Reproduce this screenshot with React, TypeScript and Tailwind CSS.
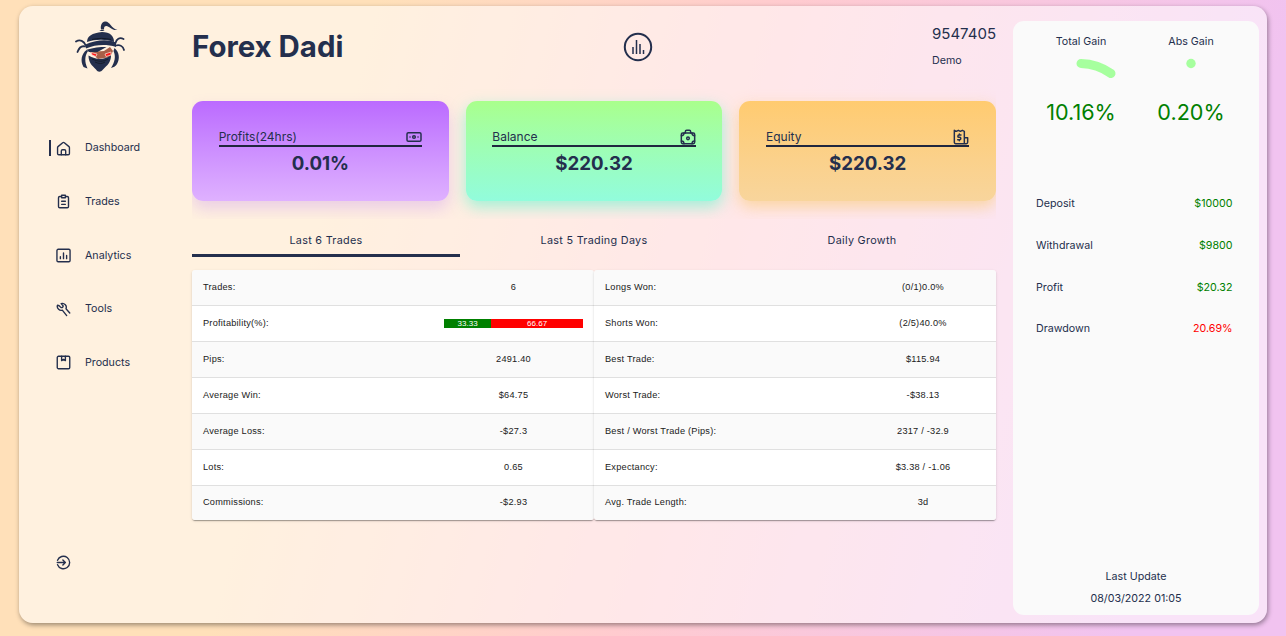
import React from 'react';

const ink = '#242f4d';

function Svg({ size, children }: { size: number; children: React.ReactNode }) {
  return (
    <svg width={size} height={size} viewBox="0 0 24 24" fill="none" stroke={ink} strokeWidth="2.200" strokeLinecap="round" strokeLinejoin="round" className="shrink-0">
      {children}
    </svg>
  );
}

const icons: Record<string, React.ReactNode> = {
  Dashboard: (
    <>
      <path d="M2.500 10.500a2 2 0 0 1 .7-1.500l7.500-6.200a2 2 0 0 1 2.600 0l7.500 6.200a2 2 0 0 1 .7 1.500V20a2 2 0 0 1-2 2h-15a2 2 0 0 1-2-2z" />
      <path d="M8.500 22v-6a2 2 0 0 1 2-2h3a2 2 0 0 1 2 2v6" />
    </>
  ),
  Trades: (
    <>
      <path d="M8 4H6a2 2 0 0 0-2 2v14a2 2 0 0 0 2 2h12a2 2 0 0 0 2-2V6a2 2 0 0 0-2-2h-2" />
      <path d="M9 2h6v4H9zM9 11.500h6M9 16.500h6" />
    </>
  ),
  Analytics: (
    <>
      <rect x="1.500" y="2" width="21" height="20" rx="2" />
      <path d="M7 14v3M12 8v9M17 12v5" />
    </>
  ),
  Tools: (
    <path d="m22 17.500-6-6.700c.9-2.500.5-4.900-1.100-6.500C12.800 2.200 10.400 1.700 8.300 2.600l3 3.400v1.600L9.700 9H8.100L5 6l-2.600-.8C1.500 7.500 2.300 10 4.200 11.700c1.500 1.500 3.800 2.100 5.900 1.400l7 8.600" />
  ),
  Products: (
    <>
      <rect x="2" y="2" width="20" height="20" rx="2" />
      <path d="M9 2v7l3-2 3 2V2" />
    </>
  ),
};

function Logo() {
  return (
    <svg width="52" height="52" viewBox="0 0 52 52" className="ml-[56px] shrink-0">
      <g fill="none" stroke="#242f4d" strokeWidth="1.800" strokeLinecap="round">
        <path d="M10.500 24C9 20 5 18 1 20.500M10 25.500C6.500 24.500 4 27 2.500 31M40.500 22c1-4 4-6 8-4M41 24.500c4-1 7 1 8 4.500" />
      </g>
      <path d="M11.500 29c-5 4-6.500 10.500-3 17l4 1.500C9.500 41 9.500 35 13 30zM39.500 27c5 4 5.500 11 2.500 16-1 2-3 3-6 4 4-6 5-12 2.500-17z" fill="#242f4d" />
      <path d="M26 8.500c-.8-4 1-8 4-8 5-.5 6 7 12.500 8.500-6 .8-8.500-4.500-11.500-4-2 .3-1.800 1.500-2 3.500z" fill="#242f4d" />
      <path d="M24.500 10c1-1.200 4-1.200 5 0z" fill="#242f4d" />
      <path d="M12 21c0-6 5-9 15-10 8 0 12 4 12 10-8-3-18-3-27 0z" fill="#242f4d" />
      <path d="M10.500 23.500c9-4.500 22-6 30.500-2V26c-10-3-20-2.500-30 1.500z" fill="#242f4d" />
      <path d="M17 18.500c6-1.500 13-1.500 19 0" fill="none" stroke="#111827" strokeWidth="1" />
      <path d="m15 31 14-1 6-4 3 4-3 6-12 2z" fill="#a75f48" />
      <path d="M11.500 28.800c7-2.300 13-2.800 20-2.800l-9 5h-8.500z" fill="#242f4d" />
      <path d="m16 31.500 6 1.500-1 2.500-4-1.500zM30 33l6-2v3l-5 1.500z" fill="#ff1717" stroke="#ffe5db" strokeWidth=".7" />
      <path d="M13.500 34.500c8 4.500 15 4.500 22.500 0 0 7-4 10-8 14-2.500 3-5 3-7 0-4-4-7.500-7-7.500-14z" fill="#242f4d" />
      <path d="M17 38c7 3 11 3 16 0M20 41c4 2 7 2 10 0" fill="none" stroke="#161e2b" />
    </svg>
  );
}

const cards = [
  {
    name: 'Profits(24hrs)',
    value: '0.01%',
    style: 'bg-linear-to-b from-[#bb6aff] to-[#dfb1ff] shadow-[0_8px_15px_rgba(188,128,246,.3)]',
    icon: (
      <>
        <rect x="1.500" y="5.500" width="21" height="13" rx="2" />
        <circle cx="12" cy="12" r="2" />
        <path d="M6 12h.1M18 12h.1" />
      </>
    ),
  },
  {
    name: 'Balance',
    value: '$220.32',
    style: 'bg-linear-to-b from-[#a9ff8c] to-[#92fcdc] shadow-[0_6px_15px_rgba(100,245,205,.6)]',
    icon: (
      <>
        <rect x="2" y="6" width="20" height="16" rx="2" />
        <path d="M8 6V4a2 2 0 0 1 2-2h4a2 2 0 0 1 2 2v2M2 10a4 4 0 0 0 4-4M18 6a4 4 0 0 0 4 4M2 18a4 4 0 0 1 4 4M18 22a4 4 0 0 1 4-4" />
        <circle cx="12" cy="14" r="2" />
      </>
    ),
  },
  {
    name: 'Equity',
    value: '$220.32',
    style: 'bg-linear-to-b from-[#ffcb70] to-[#f8d59c] shadow-[0_6px_15px_rgba(250,205,130,.7)]',
    icon: (
      <>
        <path d="M17 22H4a2 2 0 0 1-2-2V2l3 1.500L8 2l3 1.500L14 2l3 1.500V22h3a2 2 0 0 0 2-2v-7h-5" />
        <path d="M12 9H9a1.500 1.500 0 0 0 0 3.500h1a1.500 1.500 0 0 1 0 3.500H7M9.500 7.500V9m0 7v1.500" />
      </>
    ),
  },
];

const left = [
  ['Trades:', '6'],
  ['Profitability(%):', ''],
  ['Pips:', '2491.40'],
  ['Average Win:', '$64.75'],
  ['Average Loss:', '-$27.3'],
  ['Lots:', '0.65'],
  ['Commissions:', '-$2.93'],
];
const right = [
  ['Longs Won:', '(0/1)0.0%'],
  ['Shorts Won:', '(2/5)40.0%'],
  ['Best Trade:', '$115.94'],
  ['Worst Trade:', '-$38.13'],
  ['Best / Worst Trade (Pips):', '2317 / -32.9'],
  ['Expectancy:', '$3.38 / -1.06'],
  ['Avg. Trade Length:', '3d'],
];

function Table({ rows, labelWidth }: { rows: string[][]; labelWidth: string }) {
  return (
    <div className="flex h-[250px] flex-1 flex-col overflow-hidden rounded-[3px] shadow-[0_2px_1px_-1px_rgba(0,0,0,.2),0_1px_1px_rgba(0,0,0,.14),0_1px_3px_rgba(0,0,0,.12)]">
      {rows.map(([label, value], i) => (
        <div key={label} className={`flex flex-1 items-center border-b border-[#e0e0e0] pt-[0.6px] font-['Liberation_Sans',sans-serif] text-[9.200px] tracking-[0.24px] text-[#212121] last:border-0 last:pt-0 ${i % 2 ? 'bg-white' : 'bg-[#fafafa]'}`}>
          <div className={`pl-[11px] ${labelWidth}`}>{label}</div>
          {value ? (
            <div className="flex-1 text-center">{value}</div>
          ) : (
            <div className="mr-[11px] ml-[11px] flex h-[9px] flex-1 text-center text-[8px] leading-[9px] tracking-normal text-white">
              <div className="w-[34%] bg-[#008000]">33.33</div>
              <div className="w-[66%] bg-[#ff0000]">66.67</div>
            </div>
          )}
        </div>
      ))}
    </div>
  );
}

export default function App() {
  return (
    <div className="h-[636px] overflow-hidden bg-[linear-gradient(105deg,#ffe0b9_26%,#ffcbcf_54%,#f1c3f0_89%)] pt-[6px] pl-[19px] font-['Inter',sans-serif] text-[#242f4d]">
      <div className="flex h-[617px] w-[1248px] rounded-[14px] bg-white/54 shadow-[1px_2px_5px_rgba(0,0,0,.4)]">
        <aside className="flex w-[173px] flex-col pt-[15px]">
          <Logo />
          <nav className="mt-[48.400px]">
            {Object.entries(icons).map(([name, icon], i) => (
              <div key={name} className="flex h-[53.700px] items-center pl-[30px] text-[10.700px]">
                <span className={`mr-[5px] h-4 w-[2px] ${i ? '' : 'bg-[#242f4d]'}`} />
                <Svg size={15}>{icon}</Svg>
                <span className="ml-[14px]">{name}</span>
              </div>
            ))}
          </nav>
          <div className="mt-[165.600px] ml-[37px]">
            <Svg size={15}>
              <path d="M2.500 8.500a10 10 0 1 1 0 7M2 12h13M11 8l4 4-4 4" />
            </Svg>
          </div>
        </aside>
        <main className="w-[804px]">
          <header className="flex h-[95px] items-start justify-between">
            <h1 className="w-[300px] pt-[22px] text-[29.400px] leading-[37px] font-bold">Forex Dadi</h1>
            <svg width="30" height="30" viewBox="0 0 30 30" className="mt-[26px]" fill="none" stroke="#242f4d" strokeWidth="2">
              <circle cx="15" cy="15" r="13.200" />
              <path d="M10 15v7M13.500 8v14M17 12v10M20.500 18v4" strokeWidth="1.500" />
            </svg>
            <div className="flex w-[212px] justify-end pt-[17px]">
              <div className="w-[64px]">
                <div className="text-[15px] leading-[22px]">9547405</div>
                <div className="mt-[9px] text-[10.700px] leading-[13px]">Demo</div>
              </div>
            </div>
          </header>
          <div className="-mt-3 flex h-[130px] justify-between overflow-hidden pt-3">
            {cards.map((c) => (
              <section key={c.name} className={`h-[100px] w-[256.700px] rounded-[11px] px-[26.700px] pt-[28px] ${c.style}`}>
                <div className="flex h-[18px] items-center justify-between border-b-2 border-[#20273f] text-[12px]">
                  <span>{c.name}</span>
                  <Svg size={16}>{c.icon}</Svg>
                </div>
                <div className="mt-[4px] text-center text-[18.700px] leading-[25px] font-bold">{c.value}</div>
              </section>
            ))}
          </div>
          <div className="mt-[5px] flex h-[33px] text-center text-[10.800px] leading-[33px] tracking-[0.3px]">
            <div className="flex-1 border-b-[3px] border-[#242f4d]">Last 6 Trades</div>
            <div className="flex-1">Last 5 Trading Days</div>
            <div className="flex-1">Daily Growth</div>
          </div>
          <div className="mt-[13px] flex">
            <Table rows={left} labelWidth="w-[241px]" />
            <Table rows={right} labelWidth="w-[256px]" />
          </div>
        </main>
        <aside className="mt-[15px] ml-[17px] flex h-[594px] w-[246px] flex-col rounded-[11px] bg-[#fafafa]">
          <div className="flex justify-between px-[27px] pt-[13px] text-center text-[10.700px]">
            <div className="w-[82px]">
              <div className="leading-[15px]">Total Gain</div>
              <svg width="82" height="46" viewBox="0 0 82 46" fill="none" stroke="#a6ff9e" strokeWidth="9" strokeLinecap="round">
                <path d="M41 14.500a54 54 0 0 1 30 10" />
              </svg>
              <div className="text-[21.600px] leading-[35px] text-[#008000]">10.16%</div>
            </div>
            <div className="w-[82px]">
              <div className="leading-[15px]">Abs Gain</div>
              <svg width="82" height="46" viewBox="0 0 82 46">
                <circle cx="41" cy="14.500" r="4.700" fill="#a6ff9e" />
              </svg>
              <div className="text-[21.600px] leading-[35px] text-[#008000]">0.20%</div>
            </div>
          </div>
          <div className="mt-[53.500px] px-[23px] pr-[26.500px] text-[10.700px]">
            {[
              ['Deposit', '$10000'],
              ['Withdrawal', '$9800'],
              ['Profit', '$20.32'],
              ['Drawdown', '20.69%'],
            ].map(([k, v]) => (
              <div key={k} className="flex h-[41.700px] items-center justify-between">
                <span>{k}</span>
                <span className={k === 'Drawdown' ? 'text-[#ff0000]' : 'text-[#008000]'}>{v}</span>
              </div>
            ))}
          </div>
          <div className="mt-auto mb-[5px] text-center text-[10.700px] leading-[22px]">
            <div>Last Update</div>
            <div>08/03/2022 01:05</div>
          </div>
        </aside>
      </div>
    </div>
  );
}
